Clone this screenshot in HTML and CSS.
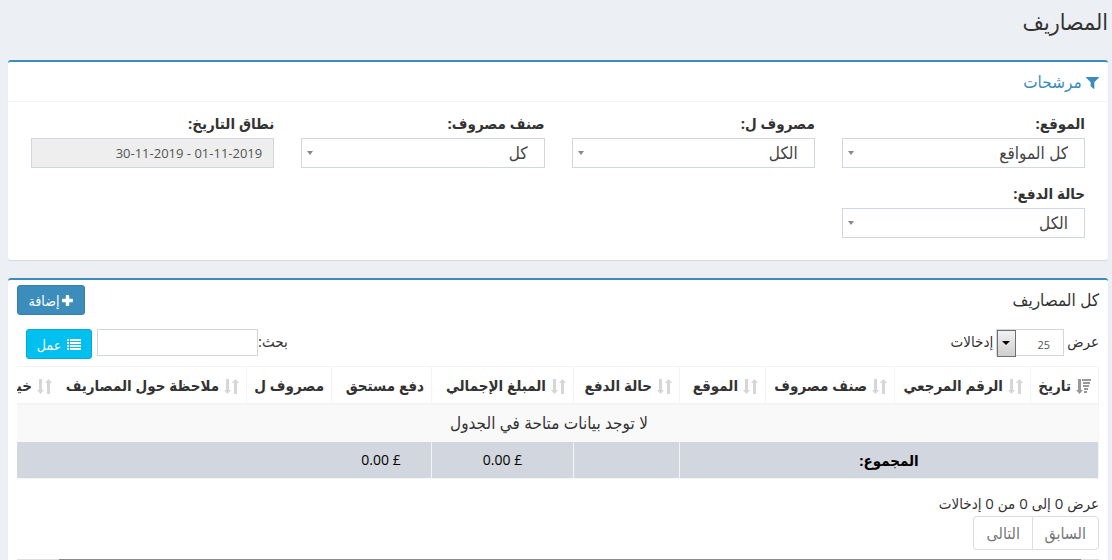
FILE: index.html
```html
<!DOCTYPE html>
<html lang="ar" dir="rtl">
<head>
    <meta charset="UTF-8">
    <meta name="viewport" content="width=device-width, initial-scale=1.0">
    <title>المصاريف</title>
    <link rel="stylesheet" href="styles.css">
</head>
<body>

    <!-- Icons -->
    <svg class="sprite" aria-hidden="true">
        <symbol id="icon-filter" viewBox="0 0 14 14">
            <path d="M0.6 1h12.8c0.6 0 0.8 0.6 0.4 1L9 6.8V13.4c0 0.5-0.5 0.7-0.9 0.4L5.3 11.2C5.1 11 5 10.8 5 10.6V6.8L0.2 2C-0.2 1.6 0 1 0.6 1z"/>
        </symbol>
        <symbol id="icon-plus" viewBox="0 0 11 11">
            <path d="M4.6 0h1.8c0.5 0 0.8 0.3 0.8 0.8v3h3c0.5 0 0.8 0.3 0.8 0.8v1.8c0 0.5-0.3 0.8-0.8 0.8h-3v3c0 0.5-0.3 0.8-0.8 0.8H4.6c-0.5 0-0.8-0.3-0.8-0.8v-3h-3C0.3 7.2 0 6.9 0 6.4V4.6c0-0.5 0.3-0.8 0.8-0.8h3v-3C3.8 0.3 4.1 0 4.6 0z"/>
        </symbol>
        <symbol id="icon-list" viewBox="0 0 14 11">
            <path d="M0 0h2v2H0zM3 0h11v2H3zM0 3h2v2H0zM3 3h11v2H3zM0 6h2v2H0zM3 6h11v2H3zM0 9h2v2H0zM3 9h11v2H3z"/>
        </symbol>
        <symbol id="icon-sort" viewBox="0 0 15 15">
            <path d="M2 0h3v11h2L3.5 15 0 11h2zM10 15h3V4h2L11.5 0 8 4h2z"/>
        </symbol>
        <symbol id="icon-sort-desc" viewBox="0 0 15 15">
            <path d="M2 0h3v11h2L3.5 15 0 11h2zM6 0h9v2H6zM7 3h7v2H7zM7 6h6v2H7zM8 9h4v2H8zM8 12h3v2H8z"/>
        </symbol>
    </svg>

    <h1>المصاريف</h1>

    <!-- Filters -->
    <div class="box">
        <div class="box-header with-border">
            <h3><a href="#filters"><svg class="icon-filter"><use href="#icon-filter"/></svg> مرشحات</a></h3>
        </div>
        <div class="filters" id="filters">
            <div class="form-group">
                <label for="location">الموقع:</label>
                <div class="select">
                    <select id="location"><option>كل المواقع</option></select>
                </div>
            </div>
            <div class="form-group">
                <label for="expense_for">مصروف ل:</label>
                <div class="select">
                    <select id="expense_for"><option>الكل</option></select>
                </div>
            </div>
            <div class="form-group">
                <label for="category">صنف مصروف:</label>
                <div class="select">
                    <select id="category"><option>كل</option></select>
                </div>
            </div>
            <div class="form-group">
                <label for="date_range">نطاق التاريخ:</label>
                <input type="text" id="date_range" value="01-11-2019 - 30-11-2019" readonly>
            </div>
            <div class="form-group">
                <label for="payment_status">حالة الدفع:</label>
                <div class="select">
                    <select id="payment_status"><option>الكل</option></select>
                </div>
            </div>
        </div>
    </div>

    <!-- Expense list -->
    <div class="box">
        <div class="box-header">
            <h3>كل المصاريف</h3>
            <button type="button" class="btn btn-primary"><svg class="icon-plus"><use href="#icon-plus"/></svg>إضافة</button>
        </div>
        <div class="box-body">
            <div class="toolbar">
                <div class="length">
                    <label for="length">عرض</label>
                    <div class="length-select">
                        <select id="length"><option>25</option></select>
                    </div>
                    <span>إدخالات</span>
                </div>
                <div class="search">
                    <label for="search">بحث:</label>
                    <input type="search" id="search">
                    <button type="button" class="btn btn-info"><svg class="icon-list"><use href="#icon-list"/></svg>عمل</button>
                </div>
            </div>

            <div class="table-wrap">
                <table>
                    <colgroup>
                        <col class="col-date">
                        <col class="col-ref">
                        <col class="col-category">
                        <col class="col-location">
                        <col class="col-status">
                        <col class="col-total">
                        <col class="col-due">
                        <col class="col-for">
                        <col class="col-note">
                        <col class="col-action">
                    </colgroup>
                    <thead>
                        <tr>
                            <th class="sorted"><svg><use href="#icon-sort-desc"/></svg>تاريخ</th>
                            <th><svg><use href="#icon-sort"/></svg>الرقم المرجعي</th>
                            <th><svg><use href="#icon-sort"/></svg>صنف مصروف</th>
                            <th><svg><use href="#icon-sort"/></svg>الموقع</th>
                            <th><svg><use href="#icon-sort"/></svg>حالة الدفع</th>
                            <th><svg><use href="#icon-sort"/></svg>المبلغ الإجمالي</th>
                            <th>دفع مستحق</th>
                            <th>مصروف ل</th>
                            <th class="no-border"><svg><use href="#icon-sort"/></svg>ملاحظة حول المصاريف</th>
                            <th><svg><use href="#icon-sort"/></svg>خيارات</th>
                        </tr>
                    </thead>
                    <tbody>
                        <tr>
                            <td colspan="10">لا توجد بيانات متاحة في الجدول</td>
                        </tr>
                    </tbody>
                    <tfoot>
                        <tr>
                            <td colspan="4"><strong>المجموع:</strong></td>
                            <td></td>
                            <td>£ 0.00</td>
                            <td class="no-border">£ 0.00</td>
                            <td colspan="3"></td>
                        </tr>
                    </tfoot>
                </table>
            </div>

            <div class="info">عرض 0 إلى 0 من 0 إدخالات</div>
            <div class="pagination">
                <a href="#prev">السابق</a>
                <a href="#next">التالى</a>
            </div>
            <div class="scroll-track"><div class="scroll-thumb"></div></div>
        </div>
    </div>

</body>
</html>
```
FILE: styles.css
```css
* {
    box-sizing: border-box;
}

body {
    margin: 0;
    padding: 0 4px 0 8px;
    background-color: #ecf0f5;
    color: #333;
    font-family: "Open Sans", "DejaVu Sans Condensed", "DejaVu Sans", sans-serif;
    font-size: 15px;
    line-height: 20px;
    overflow-x: hidden;
}

.sprite {
    display: none;
}

svg {
    fill: currentColor;
}

h1, h3 {
    margin: 0;
    font-weight: normal;
}

h1 {
    padding: 6px 0 24px;
    font-size: 23px;
    line-height: 30px;
}

a {
    color: #3c8dbc;
    text-decoration: none;
}

input, select, button {
    font-family: inherit;
    font-size: 14px;
    margin: 0;
}

.box {
    margin-bottom: 18px;
    background-color: #fff;
    border-top: 2px solid #3c8dbc;
    border-radius: 3px;
    box-shadow: 0 1px 1px rgba(0, 0, 0, 0.1);
}

.box-header {
    display: flex;
    justify-content: space-between;
    align-items: center;
    height: 40px;
    padding: 0 9px;
}

    .box-header h3 {
        font-size: 17px;
    }

.with-border {
    border-bottom: 1px solid #f4f4f4;
}

.icon-filter {
    width: 13px;
    height: 13px;
    vertical-align: -1px;
}

/* Filters */
.filters {
    display: grid;
    grid-template-columns: repeat(4, 1fr);
    gap: 15px 27px;
    padding: 11px 23px 22px;
}

    .filters label {
        display: block;
        height: 25px;
        font-weight: bold;
    }

    .filters select, .filters input {
        display: block;
        width: 100%;
        height: 30px;
        border: 1px solid #d2d6de;
        border-radius: 0;
        background-color: #fff;
        color: #444;
    }

    .filters select {
        appearance: none;
        padding: 0 16px 2px 20px;
        font-size: 17px;
    }

    .filters input {
        padding: 0 11px;
        background-color: #eee;
        color: #555;
        font-size: 13px;
    }

.select {
    position: relative;
}

    .select::after {
        content: "";
        position: absolute;
        left: 6px;
        top: 13px;
        border: 3px solid transparent;
        border-top: 4px solid #888;
        border-bottom: 0;
    }

/* Buttons */
.btn {
    display: flex;
    align-items: center;
    justify-content: center;
    height: 30px;
    padding: 0;
    border: 1px solid #367fa9;
    border-radius: 3px;
    color: #fff;
    cursor: pointer;
}

.btn-primary {
    width: 68px;
    gap: 3px;
    background-color: #3c8dbc;
}

.btn-info {
    width: 66px;
    gap: 6px;
    margin-right: 5px;
    border-color: #00acd6;
    background-color: #00c0ef;
}

.icon-plus {
    width: 11px;
    height: 11px;
}

.icon-list {
    width: 14px;
    height: 11px;
}

/* Toolbar over the table */
.box-body {
    padding: 9px 9px 0;
}

.toolbar {
    display: flex;
    justify-content: space-between;
    height: 37px;
    padding-left: 9px;
}

.length, .search {
    display: flex;
    align-items: flex-start;
}

    .length label, .length span, .search label {
        line-height: 24px;
    }

.length {
    gap: 3px;
}

.length-select {
    position: relative;
}

    .length-select select {
        appearance: none;
        width: 68px;
        height: 27px;
        padding: 3px 13px 0 0;
        border: 1px solid #d2d6de;
        border-radius: 0;
        background-color: #fff;
        color: #555;
        font-size: 11px;
    }

    .length-select::before {
        content: "";
        position: absolute;
        left: 1px;
        top: 1px;
        width: 17px;
        height: 25px;
        border: 1px solid #707070;
        background: linear-gradient(#f2f2f2, #cfcfcf);
        pointer-events: none;
    }

    .length-select::after {
        content: "";
        position: absolute;
        left: 6px;
        top: 12px;
        border: 4px solid transparent;
        border-top-color: #000;
        border-bottom: 0;
        pointer-events: none;
    }

.search input {
    width: 161px;
    height: 27px;
    border: 1px solid #d2d6de;
    border-radius: 0;
    background-color: #fff;
}

/* Table */
.table-wrap {
    overflow: hidden;
}

table {
    width: 1100px;
    table-layout: fixed;
    border-collapse: separate;
    border-spacing: 0;
    border-top: 1px solid #f4f4f4;
    border-right: 1px solid #f4f4f4;
}

.col-date { width: 68px; }
.col-ref { width: 136px; }
.col-category { width: 129px; }
.col-location { width: 86px; }
.col-status { width: 106px; }
.col-total { width: 142px; }
.col-due { width: 100px; }
.col-for { width: 85px; }
.col-note { width: 187px; }
.col-action { width: 60px; }

th, td {
    height: 37px;
    padding: 0 7px;
    border-left: 1px solid #f4f4f4;
    white-space: nowrap;
    text-align: center;
}

th {
    height: 38px;
    border-bottom: 2px solid #f4f4f4;
    text-align: right;
}

    th svg {
        width: 15px;
        height: 15px;
        margin-left: 5px;
        color: #d6d6d6;
        vertical-align: -3px;
    }

    th.sorted svg {
        color: #999;
    }

tbody td {
    padding-bottom: 2px;
    background-color: #f9f9f9;
    font-size: 17px;
}

tfoot td {
    border-bottom: 1px solid #f4f4f4;
    background-color: #d2d6de;
    color: #000;
    font-size: 14px;
}

tfoot strong {
    font-size: 15px;
}

th.no-border, td.no-border {
    border-left: 0;
}

/* Pagination */
.info {
    padding: 14px 0 3px;
}

.pagination {
    display: flex;
    height: 34px;
    font-size: 16px;
}

    .pagination a {
        padding: 6px 12px;
        border: 1px solid #ddd;
        color: #777;
    }

    .pagination a:first-child {
        width: 67px;
        border-radius: 0 4px 4px 0;
    }

    .pagination a:last-child {
        width: 59px;
        border-right: 0;
        border-radius: 4px 0 0 4px;
    }

.scroll-track {
    height: 15px;
    margin-top: 9px;
    padding: 0 18px 0 42px;
    background-color: #ddd;
}

.scroll-thumb {
    height: 100%;
    background-color: #8b8b8b;
}
```
